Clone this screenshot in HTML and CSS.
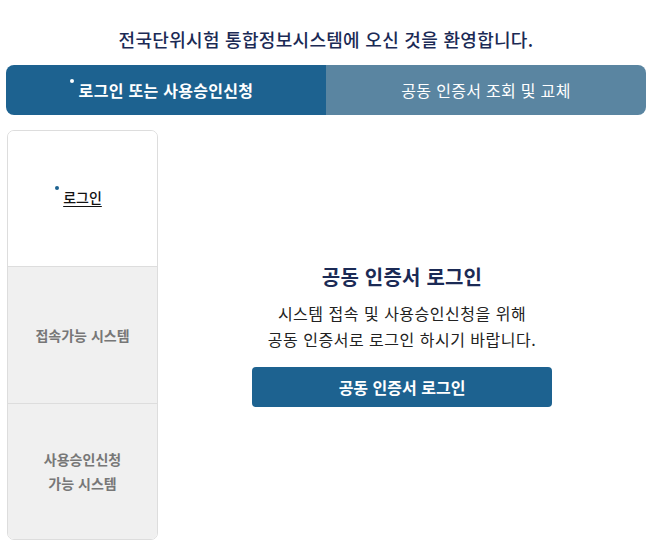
FILE: index.html
```html
<!DOCTYPE html>
<html lang="ko">
<head>
    <meta charset="utf-8">
    <link rel="stylesheet" href="styles.css">
</head>
<body>
    <h1 class="welcome">전국단위시험 통합정보시스템에 오신 것을 환영합니다.</h1>

    <div class="tabs">
        <div class="tab active"><span class="dot">로그인 또는 사용승인신청</span></div>
        <div class="tab">공동 인증서 조회 및 교체</div>
    </div>

    <div class="content">
        <ul class="side-menu">
            <li class="active"><span class="dot">로그인</span></li>
            <li>접속가능 시스템</li>
            <li>사용승인신청<br>가능 시스템</li>
        </ul>

        <div class="panel">
            <h2>공동 인증서 로그인</h2>
            <p>시스템 접속 및 사용승인신청을 위해<br>공동 인증서로 로그인 하시기 바랍니다.</p>
            <button class="btn-login">공동 인증서 로그인</button>
        </div>
    </div>
</body>
</html>
```

FILE: styles.css
```css
body {
    font-family: "Noto Sans CJK KR", "Noto Sans", sans-serif;
    margin: 0;
    padding: 0 4px 0 6px;
    color: #222;
}

.welcome {
    margin: 0;
    padding-top: 26px;
    height: 39px;
    font-size: 18px;
    font-weight: 500;
    line-height: 26px;
    letter-spacing: 0.3px;
    text-align: center;
    color: #1b2a55;
}

.tabs {
    display: flex;
    height: 50px;
    border-radius: 8px;
    overflow: hidden;
}

.tab {
    flex: 1;
    display: flex;
    align-items: center;
    justify-content: center;
    background-color: #5a85a1;
    color: #fff;
    font-size: 16px;
    letter-spacing: 0.3px;
}

.tab.active {
    background-color: #1d6290;
    font-weight: 700;
}

.dot {
    position: relative;
}

.dot::before {
    content: "";
    position: absolute;
    left: -9px;
    top: 1px;
    width: 4px;
    height: 4px;
    border-radius: 50%;
    background-color: #fff;
}

.content {
    display: flex;
    margin-top: 15px;
}

.side-menu {
    list-style: none;
    margin: 0 0 0 1px;
    padding: 0;
    width: 149px;
    height: 408px;
    border: 1px solid #ddd;
    border-radius: 7px;
    overflow: hidden;
    display: flex;
    flex-direction: column;
}

.side-menu li {
    flex: 1;
    display: flex;
    align-items: center;
    justify-content: center;
    text-align: center;
    background-color: #f0f0f0;
    color: #777;
    font-size: 14px;
    font-weight: 700;
    line-height: 24px;
}

.side-menu li + li {
    border-top: 1px solid #ddd;
}

.side-menu li.active {
    background-color: #fff;
    color: #111;
    font-weight: 500;
    text-decoration: underline;
    text-underline-offset: 3px;
}

.side-menu li.active .dot {
    top: -2px;
}

.side-menu li.active .dot::before {
    background-color: #1d6290;
    left: -8px;
    top: 1px;
}

.panel {
    flex: 1;
    display: flex;
    flex-direction: column;
    align-items: center;
    justify-content: center;
    text-align: center;
}

.panel h2 {
    margin: 0;
    font-size: 20px;
    font-weight: 700;
    line-height: 26px;
    color: #1b2a55;
    letter-spacing: 0.2px;
}

.panel p {
    margin: 10px 0 0;
    font-size: 16px;
    line-height: 26px;
    letter-spacing: 0.5px;
    color: #222;
}

.btn-login {
    margin-top: 15px;
    width: 300px;
    height: 40px;
    border: none;
    border-radius: 4px;
    background-color: #1d6290;
    color: #fff;
    font-family: inherit;
    font-size: 16px;
    font-weight: 700;
}
```
